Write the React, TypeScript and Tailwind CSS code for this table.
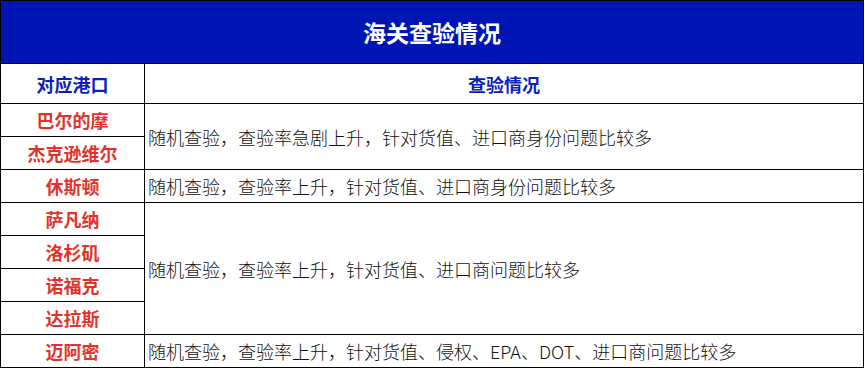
import React from "react";

const font = { fontFamily: '"Noto Sans CJK SC", "Noto Sans", sans-serif' };

type Row = { port: string; text?: string; span?: number };

const rows: Row[] = [
  { port: "巴尔的摩", text: "随机查验，查验率急剧上升，针对货值、进口商身份问题比较多", span: 2 },
  { port: "杰克逊维尔" },
  { port: "休斯顿", text: "随机查验，查验率上升，针对货值、进口商身份问题比较多", span: 1 },
  { port: "萨凡纳", text: "随机查验，查验率上升，针对货值、进口商问题比较多", span: 4 },
  { port: "洛杉矶" },
  { port: "诺福克" },
  { port: "达拉斯" },
  { port: "迈阿密", text: "随机查验，查验率上升，针对货值、侵权、EPA、DOT、进口商问题比较多", span: 1 },
];

export default function App() {
  return (
    <div className="w-[865px] h-[368px] bg-white" style={font}>
      <div className="w-[864px] border border-black box-border">
        <div className="h-[63px] bg-[#0016b4] border-b border-black flex items-center justify-center text-white font-bold text-[23px] leading-none">
          海关查验情况
        </div>
        <div className="grid grid-cols-[144px_1fr] h-[40px] border-b border-black">
          <div className="border-r border-black flex items-center justify-center text-[#0a20bc] font-bold text-[18px] leading-none">
            对应港口
          </div>
          <div className="flex items-center justify-center text-[#0a20bc] font-bold text-[18px] leading-none">
            查验情况
          </div>
        </div>
        <div className="grid grid-cols-[144px_1fr] grid-rows-[repeat(7,33px)_32px]">
          {rows.map((r, i) => {
            const last = i === rows.length - 1;
            return (
              <React.Fragment key={r.port}>
                <div
                  className={`border-r border-black flex items-center justify-center text-[#e2332a] font-bold text-[18px] leading-none ${last ? "" : "border-b"}`}
                  style={{ gridColumn: 1, gridRow: i + 1 }}
                >
                  {r.port}
                </div>
                {r.text && (
                  <div
                    className={`border-black flex items-center pl-[3px] text-[#111111] font-light text-[18px] leading-none ${last ? "" : "border-b"}`}
                    style={{ gridColumn: 2, gridRow: `${i + 1} / span ${r.span}` }}
                  >
                    {r.text}
                  </div>
                )}
              </React.Fragment>
            );
          })}
        </div>
      </div>
    </div>
  );
}
